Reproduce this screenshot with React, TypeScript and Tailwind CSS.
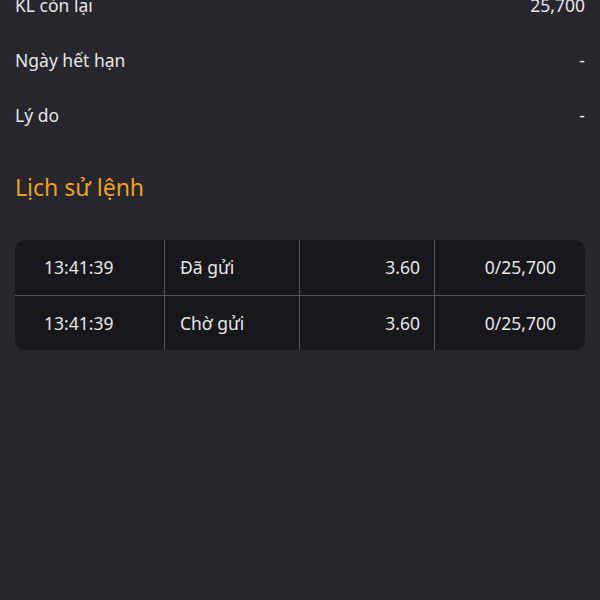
const info = [
  { label: "KL còn lại", value: "25,700" },
  { label: "Ngày hết hạn", value: "-" },
  { label: "Lý do", value: "-" },
];

const history = [
  { time: "13:41:39", status: "Đã gửi", price: "3.60", qty: "0/25,700" },
  { time: "13:41:39", status: "Chờ gửi", price: "3.60", qty: "0/25,700" },
];

export default function App() {
  return (
    <div
      className="w-[600px] h-[600px] overflow-hidden bg-[#27262c] text-[#e6e6e8]"
      style={{ fontFamily: '"Noto Sans", "Open Sans", sans-serif' }}
    >
      <div className="-mt-[22px] px-[15px]">
        {/* INFO ROWS */}
        {info.map((r) => (
          <div key={r.label} className="flex items-center justify-between h-[55px] text-[17.5px]">
            <span>{r.label}</span>
            <span>{r.value}</span>
          </div>
        ))}

        {/* HISTORY */}
        <h2 className="mt-[29px] text-[23px] text-[#f0a01e] leading-[30px]">Lịch sử lệnh</h2>

        <div className="mt-[38px] rounded-[10px] bg-[#18171b] overflow-hidden">
          {history.map((h, i) => (
            <div
              key={i}
              className={`grid grid-cols-[150px_135px_135px_1fr] h-[55px] text-[17.5px] ${
                i > 0 ? "border-t border-[#55555a]" : ""
              }`}
            >
              <div className="flex items-center pl-[29px] border-r border-[#55555a]">{h.time}</div>
              <div className="flex items-center pl-[15px] border-r border-[#55555a]">{h.status}</div>
              <div className="flex items-center justify-end pr-[14px] border-r border-[#55555a]">{h.price}</div>
              <div className="flex items-center justify-end pr-[29px]">{h.qty}</div>
            </div>
          ))}
        </div>
      </div>
    </div>
  );
}
